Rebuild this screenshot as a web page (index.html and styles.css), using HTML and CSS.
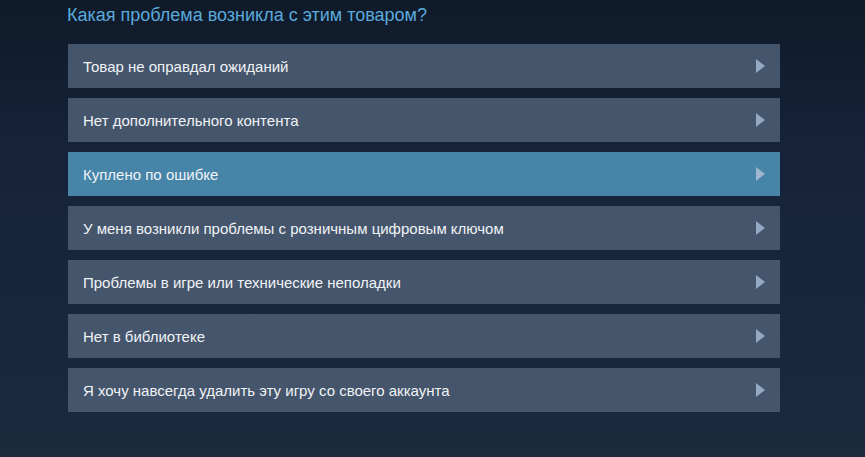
FILE: index.html
```html
<!DOCTYPE html>
<html lang="ru">
<head>
<meta charset="utf-8">
<title>Какая проблема возникла с этим товаром?</title>
<link rel="stylesheet" href="styles.css">
</head>
<body>
<main class="wizard">
  <h2 class="wizard-title">Какая проблема возникла с этим товаром?</h2>
  <div class="options">
    <a class="option" href="#"><span class="option-label">Товар не оправдал ожиданий</span><span class="option-arrow"></span></a>
    <a class="option" href="#"><span class="option-label">Нет дополнительного контента</span><span class="option-arrow"></span></a>
    <a class="option option-active" href="#"><span class="option-label">Куплено по ошибке</span><span class="option-arrow"></span></a>
    <a class="option" href="#"><span class="option-label">У меня возникли проблемы с розничным цифровым ключом</span><span class="option-arrow"></span></a>
    <a class="option" href="#"><span class="option-label">Проблемы в игре или технические неполадки</span><span class="option-arrow"></span></a>
    <a class="option" href="#"><span class="option-label">Нет в библиотеке</span><span class="option-arrow"></span></a>
    <a class="option" href="#"><span class="option-label">Я хочу навсегда удалить эту игру со своего аккаунта</span><span class="option-arrow"></span></a>
  </div>
</main>
</body>
</html>
```
FILE: styles.css
```css
html, body {
  margin: 0;
  height: 100%;
}
body {
  background: linear-gradient(180deg, #0f1a29 0%, #16233a 35%, #1b2a3d 100%);
  font-family: Arial, "Liberation Sans", sans-serif;
  overflow: hidden;
}
.wizard {
  width: 712px;
  padding: 0 0 0 68px;
}
.wizard-title {
  margin: 0 0 0 -1px;
  padding-top: 5px;
  height: 44px;
  box-sizing: border-box;
  font-size: 18px;
  font-weight: normal;
  line-height: 21px;
  color: #5ba9db;
}
.options {
  display: flex;
  flex-direction: column;
  gap: 10px;
}
.option {
  display: flex;
  align-items: center;
  justify-content: space-between;
  height: 44px;
  padding: 0 15px 0 15px;
  background: #45556b;
  color: #f0f3f6;
  font-size: 15px;
  text-decoration: none;
}
.option-active {
  background: #4684a8;
}
.option-arrow {
  width: 0;
  height: 0;
  border-top: 7px solid transparent;
  border-bottom: 7px solid transparent;
  border-left: 9px solid #93a9c4;
}
.option-active .option-arrow {
  border-left-color: #9fb6cf;
}
```
